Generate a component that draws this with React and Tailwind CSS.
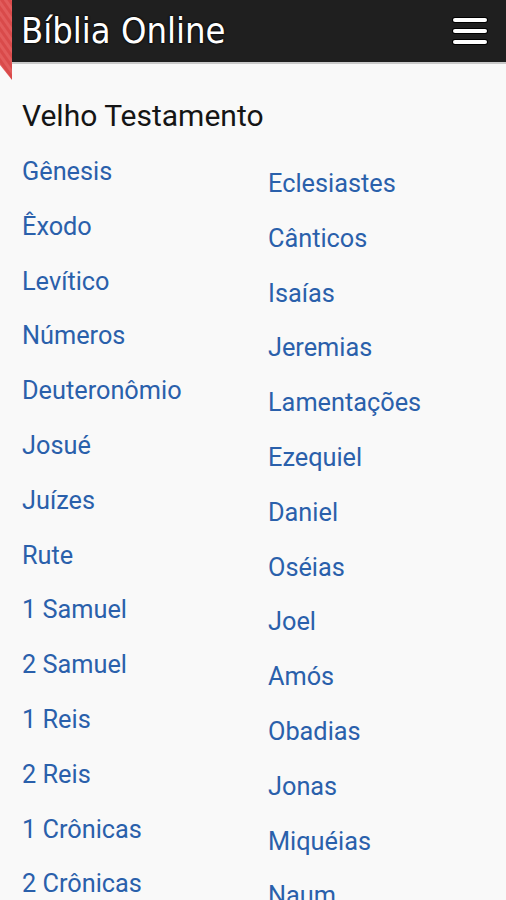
import React from "react";

const left = ["Gênesis","Êxodo","Levítico","Números","Deuteronômio","Josué","Juízes","Rute","1 Samuel","2 Samuel","1 Reis","2 Reis","1 Crônicas","2 Crônicas"];
const right = ["Eclesiastes","Cânticos","Isaías","Jeremias","Lamentações","Ezequiel","Daniel","Oséias","Joel","Amós","Obadias","Jonas","Miquéias","Naum"];

function Ribbon() {
  return (
    <svg className="absolute left-0 top-0" width="13" height="82" viewBox="0 0 13 82">
      <defs>
        <pattern id="st" width="6" height="6" patternUnits="userSpaceOnUse" patternTransform="rotate(-35)">
          <rect width="6" height="6" fill="#e25c5c" />
          <rect width="3" height="6" fill="#d94a4a" />
        </pattern>
      </defs>
      <polygon points="0,0 12,0 12,80 0,65" fill="url(#st)" />
    </svg>
  );
}

export default function App() {
  return (
    <div className="relative h-[900px] overflow-hidden bg-[#f9f9f9]">
      <header className="flex h-[64px] items-center justify-between border-b-2 border-[#c9c9c9] bg-[#1f1f1f] pl-[21px] pr-[19px]">
        <h1
          className="text-[36px] leading-none text-white"
          style={{ fontFamily: '"DejaVu Sans Condensed", "DejaVu Sans", sans-serif', textShadow: "0 0 2px #000, 0 0 2px #000" }}
        >
          Bíblia Online
        </h1>
        <div className="flex w-[34px] flex-col gap-[7px]">
          <span className="block h-[4px] rounded-full bg-white ring-1 ring-black" />
          <span className="block h-[4px] rounded-full bg-white ring-1 ring-black" />
          <span className="block h-[4px] rounded-full bg-white ring-1 ring-black" />
        </div>
      </header>
      <Ribbon />
      <main className="px-[22px]" style={{ fontFamily: "Roboto, sans-serif" }}>
        <h2 className="mt-[35px] text-[30px] leading-[34px] text-[#151515]">Velho Testamento</h2>
        <div className="mt-[12px] grid grid-cols-[246px_1fr]">
          <ul>
            {left.map((b) => (
              <li key={b} className="text-[25.3px] leading-[54.8px] text-[#2a60ab]">{b}</li>
            ))}
          </ul>
          <ul className="pt-[12px]">
            {right.map((b) => (
              <li key={b} className="text-[25.3px] leading-[54.8px] text-[#2a60ab]">{b}</li>
            ))}
          </ul>
        </div>
      </main>
    </div>
  );
}
